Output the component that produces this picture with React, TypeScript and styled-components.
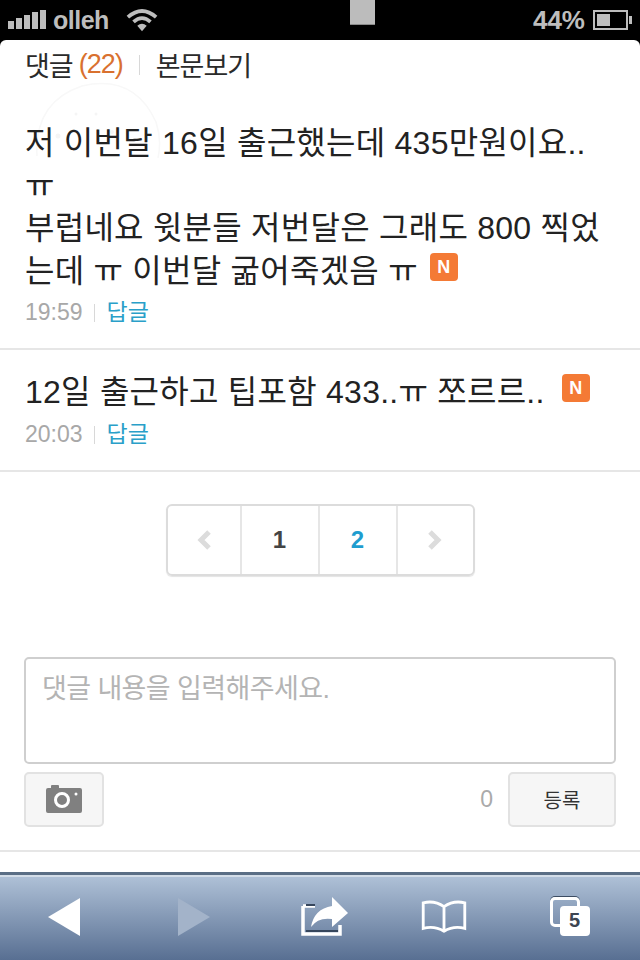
import React from 'react';
import styled, { createGlobalStyle } from 'styled-components';

const Global = createGlobalStyle`
  html, body {
    margin: 0;
    padding: 0;
    background: #000;
  }
  * {
    box-sizing: border-box;
  }
`;

const KR = `"Liberation Sans", "Noto Sans CJK KR", sans-serif`;

const Screen = styled.div`
  width: 640px;
  height: 960px;
  display: flex;
  flex-direction: column;
  overflow: hidden;
  background: #000;
  font-family: ${KR};
  position: relative;
`;

const StatusBar = styled.div`
  height: 40px;
  flex: none;
  display: flex;
  align-items: center;
  padding: 0 7px 0 8px;
  color: #bdbdbd;
  position: relative;
`;

const Carrier = styled.span`
  font-size: 25px;
  font-weight: 700;
  margin-left: 7px;
  letter-spacing: -0.5px;
`;

const Battery = styled.span`
  margin-left: auto;
  font-size: 26px;
  font-weight: 700;
  margin-right: 8px;
`;

const Notch = styled.div`
  position: absolute;
  left: 350px;
  top: 0;
  width: 25px;
  height: 25px;
  background: #bcbcbc;
  border-bottom: 1px solid #8a8a8a;
`;

const Page = styled.div`
  flex: 1;
  min-height: 0;
  background: #fff;
  border-radius: 6px 6px 0 0;
  display: flex;
  flex-direction: column;
  position: relative;
`;

const Watermark = styled.svg`
  position: absolute;
  left: 34px;
  top: 34px;
`;

const Tabs = styled.div`
  display: flex;
  align-items: center;
  height: 52px;
  padding: 0 0 4px 25px;
  font-size: 27px;
  letter-spacing: -1px;
  color: #2a2a2a;
  position: relative;
`;

const Count = styled.span`
  color: #d9712f;
  margin-left: 6px;
`;

const TabDivider = styled.span`
  width: 1px;
  height: 20px;
  background: #d8d8d8;
  margin: 2px 16px 0 16px;
`;

const Comment = styled.div<{ $pad: number }>`
  padding: ${p => p.$pad}px 25px 21px 25px;
  border-bottom: 2px solid #e6e6e6;
  position: relative;
`;

const CommentText = styled.div`
  font-size: 32px;
  line-height: 42.5px;
  color: #222;
  letter-spacing: 0.25px;
`;

const NewBadge = styled.span<{ $gap: number }>`
  display: inline-flex;
  align-items: center;
  justify-content: center;
  width: 28px;
  height: 28px;
  margin-left: ${p => p.$gap}px;
  border-radius: 4px;
  background: #f47a35;
  color: #fff;
  font-size: 18px;
  font-weight: 700;
  vertical-align: 9px;
  line-height: 1;
  letter-spacing: 0;
`;

const Meta = styled.div`
  display: flex;
  align-items: center;
  margin-top: 5px;
  font-size: 23px;
  line-height: 30px;
  color: #a8a8a8;
`;

const MetaDivider = styled.span`
  width: 1px;
  height: 18px;
  background: #d8d8d8;
  margin: 2px 12px 0 11px;
`;

const Reply = styled.span`
  color: #2a9fc9;
`;

const Pager = styled.div`
  align-self: center;
  display: grid;
  grid-template-columns: 72px 78px 78px 1fr;
  width: 309px;
  height: 72px;
  margin-top: 32px;
  border: 2px solid #dcdcdc;
  border-radius: 6px;
  box-shadow: 0 1px 1px #e4e4e4;
`;

const PageCell = styled.div<{ $active?: boolean }>`
  display: flex;
  align-items: center;
  justify-content: center;
  font-size: 24px;
  font-weight: 700;
  color: ${p => (p.$active ? '#1f9dcf' : '#444')};
  & + & {
    border-left: 2px solid #e6e6e6;
  }
`;

const Form = styled.div`
  margin-top: 81px;
  padding: 0 24px 23px 24px;
  border-bottom: 2px solid #e6e6e6;
`;

const TextBox = styled.div`
  height: 107px;
  border: 2px solid #cfcfcf;
  border-radius: 5px;
  padding: 14px 16px;
  font-size: 27px;
  line-height: 32px;
  letter-spacing: -0.6px;
  color: #b4b4b4;
`;

const FormRow = styled.div`
  display: flex;
  align-items: center;
  margin-top: 8px;
`;

const GrayButton = styled.div<{ $w: number }>`
  width: ${p => p.$w}px;
  height: 55px;
  display: flex;
  align-items: center;
  justify-content: center;
  background: #f6f6f6;
  border: 2px solid #e2e2e2;
  border-radius: 5px;
  font-size: 20px;
  color: #333;
`;

const CharCount = styled.span`
  margin-left: auto;
  margin-right: 15px;
  font-size: 23px;
  color: #aaa;
`;

const Toolbar = styled.div`
  flex: none;
  height: 88px;
  padding-bottom: 2px;
  display: grid;
  grid-template-columns: 128px 132px 130px 108px 1fr;
  justify-items: center;
  align-items: center;
  border-top: 3px solid #5a6e85;
  box-shadow: inset 0 2px 0 #d3dde8;
  background: linear-gradient(#b0c2d8, #586f92);
`;

const ToolIcon = styled.svg`
  display: block;
  overflow: visible;
`;

const Tabcount = styled.div`
  position: relative;
  width: 42px;
  height: 40px;
  margin-left: 3px;
`;

const TabBack = styled.div`
  position: absolute;
  left: 0;
  top: 0;
  width: 30px;
  height: 30px;
  border: 3px solid #fff;
  border-radius: 5px;
  box-shadow: 0 -1px 0 #3c4c62;
`;

const TabFront = styled.div`
  position: absolute;
  left: 10px;
  top: 9px;
  width: 30px;
  height: 30px;
  background: #fff;
  border-radius: 4px;
  color: #3c4552;
  font-size: 20px;
  font-weight: 700;
  display: flex;
  align-items: center;
  justify-content: center;
`;

export default function App() {
  return (
    <>
      <Global />
      <Screen>
        <StatusBar>
          <svg width="38" height="20" viewBox="0 0 38 20">
            <rect x="0" y="11" width="6" height="8" fill="#bdbdbd" />
            <rect x="8" y="8" width="6" height="11" fill="#bdbdbd" />
            <rect x="16" y="5" width="6" height="14" fill="#bdbdbd" />
            <rect x="24" y="2" width="6" height="17" fill="#bdbdbd" />
            <rect x="32" y="0" width="6" height="19" fill="#bdbdbd" />
          </svg>
          <Carrier>olleh</Carrier>
          <svg width="32" height="26" viewBox="0 0 34 26" style={{ marginLeft: 17 }}>
            <path d="M2 10 Q17 -3 32 10" fill="none" stroke="#bdbdbd" strokeWidth="4" />
            <path d="M8 15 Q17 7 26 15" fill="none" stroke="#bdbdbd" strokeWidth="4" />
            <path d="M12 19 L17 25 L22 19 Q17 15 12 19Z" fill="#bdbdbd" />
          </svg>
          <Notch />
          <Battery>44%</Battery>
          <svg width="40" height="20" viewBox="0 0 40 20">
            <rect x="1" y="1" width="33" height="18" fill="none" stroke="#bdbdbd" strokeWidth="2" />
            <rect x="4" y="4" width="13" height="12" fill="#bdbdbd" />
            <rect x="36" y="6" width="3" height="8" fill="#bdbdbd" />
          </svg>
        </StatusBar>
        <Page>
          <Watermark width="130" height="90" viewBox="0 0 130 90">
            <path
              d="M3 82 Q0 28 48 12 Q100 0 122 48 Q128 66 124 84"
              fill="none"
              stroke="#f8f8f8"
              strokeWidth="1.5"
            />
            <circle cx="24" cy="62" r="2.5" fill="#f5f5f5" />
            <circle cx="42" cy="40" r="1.5" fill="#f5f5f5" />
            <circle cx="62" cy="40" r="1.5" fill="#f5f5f5" />
            <circle cx="78" cy="58" r="2" fill="#f5f5f5" />
          </Watermark>
          <Tabs>
            댓글<Count>(22)</Count>
            <TabDivider />
            본문보기
          </Tabs>
          <Comment $pad={30}>
            <CommentText>
              저 이번달 16일 출근했는데 435만원이요..
              <br />
              ㅠ
              <br />
              부럽네요 윗분들 저번달은 그래도 800 찍었
              <br />
              는데 ㅠ 이번달 굶어죽겠음 ㅠ
              <NewBadge $gap={12}>N</NewBadge>
            </CommentText>
            <Meta>
              19:59
              <MetaDivider />
              <Reply>답글</Reply>
            </Meta>
          </Comment>
          <Comment $pad={21}>
            <CommentText>
              12일 출근하고 팁포함 433..ㅠ 쪼르르..
              <NewBadge $gap={17}>N</NewBadge>
            </CommentText>
            <Meta>
              20:03
              <MetaDivider />
              <Reply>답글</Reply>
            </Meta>
          </Comment>
          <Pager>
            <PageCell>
              <svg width="14" height="20" viewBox="0 0 14 20">
                <path d="M12 2 L4 10 L12 18" fill="none" stroke="#dcdcdc" strokeWidth="5" />
              </svg>
            </PageCell>
            <PageCell>1</PageCell>
            <PageCell $active>2</PageCell>
            <PageCell>
              <svg width="14" height="20" viewBox="0 0 14 20">
                <path d="M2 2 L10 10 L2 18" fill="none" stroke="#dcdcdc" strokeWidth="5" />
              </svg>
            </PageCell>
          </Pager>
          <Form>
            <TextBox>댓글 내용을 입력해주세요.</TextBox>
            <FormRow>
              <GrayButton $w={80}>
                <svg width="38" height="30" viewBox="0 0 38 30">
                  <path
                    d="M3 4 H6 V2 Q6 1 7 1 H13 Q14 1 14 2 V4 H35 Q37 4 37 6 V27 Q37 29 35 29 H3 Q1 29 1 27 V6 Q1 4 3 4Z"
                    fill="#808080"
                  />
                  <circle cx="17" cy="16" r="6.5" fill="none" stroke="#fff" strokeWidth="3" />
                  <circle cx="31" cy="10" r="1.5" fill="#fff" />
                </svg>
              </GrayButton>
              <CharCount>0</CharCount>
              <GrayButton $w={108}>등록</GrayButton>
            </FormRow>
          </Form>
          <div style={{ flex: 1 }} />
        </Page>
        <Toolbar>
          <ToolIcon width="32" height="38" viewBox="0 0 32 38">
            <path d="M32 0 V38 L0 19Z" fill="#fff" />
          </ToolIcon>
          <ToolIcon width="32" height="38" viewBox="0 0 32 38">
            <path d="M0 0 V38 L32 19Z" fill="#a3b3c9" />
          </ToolIcon>
          <ToolIcon width="46" height="39" viewBox="0 0 46 39">
            <path d="M1 9 H13 M1 9 V37 H38 V28" fill="none" stroke="#fff" strokeWidth="3.5" />
            <path d="M4 8 H13 M4 34 H36" stroke="#36465c" strokeWidth="2" />
            <path d="M30 0 L46 16 L30 30 V22 Q16 20 9 30 Q12 12 30 9Z" fill="#fff" />
          </ToolIcon>
          <ToolIcon width="48" height="34" viewBox="0 0 50 36">
            <path
              d="M25 7 Q15 0 3 3 V30 Q15 27 25 33 Q35 27 47 30 V3 Q35 0 25 7Z M25 7 V33"
              fill="none"
              stroke="#fff"
              strokeWidth="3"
            />
          </ToolIcon>
          <Tabcount>
            <TabBack />
            <TabFront>5</TabFront>
          </Tabcount>
        </Toolbar>
      </Screen>
    </>
  );
}
